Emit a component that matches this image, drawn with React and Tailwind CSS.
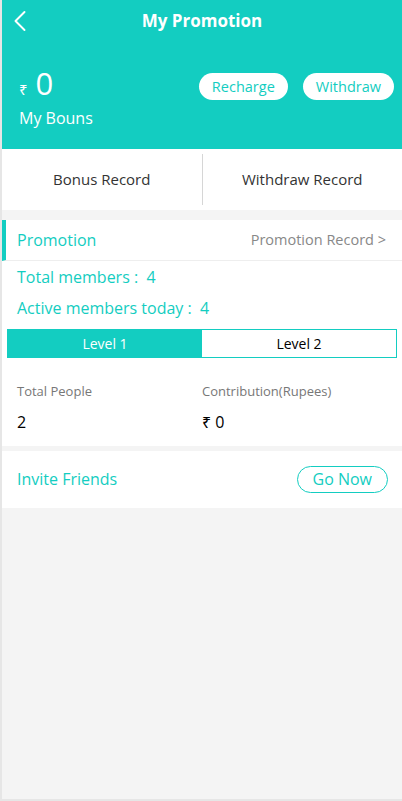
import { ChevronLeft } from "lucide-react";

const font = { fontFamily: '"Open Sans", "Noto Sans", sans-serif' };

export default function App() {
  return (
    <div
      className="h-[801px] w-[402px] flex flex-col bg-[#f4f4f4] border-l-2 border-b-2 border-[#e6e6e6] overflow-hidden"
      style={font}
    >
      {/* Header */}
      <header className="bg-[#13cdc1] text-white h-[149px] shrink-0 -ml-[2px] pl-[2px]">
        <div className="relative h-[42px] flex items-center justify-center">
          <ChevronLeft className="absolute left-0 top-[3px] w-[36px] h-[36px]" strokeWidth={1.3} />
          <div className="text-[17px] font-bold">My Promotion</div>
        </div>
        <div className="flex items-start justify-between pl-[17px] pr-[8px] pt-[22px]">
          <div>
            <div className="flex items-baseline gap-[8px]">
              <span className="text-[15px]">₹</span>
              <span className="text-[31px] leading-[38px]">0</span>
            </div>
            <div className="text-[16px] mt-[4px]">My Bouns</div>
          </div>
          <div className="flex gap-[15px] mt-[9px]">
            <button className="h-[27px] px-[13px] rounded-full bg-white text-[#13cdc1] text-[14.5px]">Recharge</button>
            <button className="h-[27px] px-[13px] rounded-full bg-white text-[#13cdc1] text-[14.5px]">Withdraw</button>
          </div>
        </div>
      </header>

      {/* Records */}
      <div className="bg-white h-[61px] flex items-center shrink-0">
        <div className="flex-1 text-center text-[15px] text-[#333]">Bonus Record</div>
        <div className="w-px h-[51px] bg-[#d6d6d6]" />
        <div className="flex-1 text-center text-[15px] text-[#333]">Withdraw Record</div>
      </div>

      {/* Promotion */}
      <div className="bg-white mt-[10px] shrink-0">
        <div className="h-[41px] flex items-center justify-between border-l-[4px] border-[#13cdc1] border-b border-b-[#eeeeee] pl-[11px] pr-[16px]">
          <span className="text-[16px] text-[#13cdc1]">Promotion</span>
          <span className="text-[14.5px] text-[#888]">Promotion Record &gt;</span>
        </div>
        <div className="px-[15px] text-[16px] text-[#13cdc1]">
          <div className="h-[31px] flex items-center">Total members :&nbsp; 4</div>
          <div className="h-[31px] flex items-center">Active members today :&nbsp; 4</div>
        </div>
        <div className="mx-[5px] mt-[6px] flex h-[29px] border border-[#13cdc1] text-[14px]">
          <div className="flex-1 bg-[#13cdc1] text-white flex items-center justify-center">Level 1</div>
          <div className="flex-1 bg-white text-black flex items-center justify-center">Level 2</div>
        </div>
        <div className="grid grid-cols-2 pt-[24px] pb-[12px]">
          <div className="pl-[15px]">
            <div className="text-[13px] text-[#777]">Total People</div>
            <div className="text-[16px] text-black mt-[8px]">2</div>
          </div>
          <div>
            <div className="text-[13px] text-[#777]">Contribution(Rupees)</div>
            <div className="text-[16px] text-black mt-[8px]">₹ 0</div>
          </div>
        </div>
      </div>

      {/* Invite */}
      <div className="bg-white mt-[5px] h-[57px] flex items-center justify-between pl-[15px] pr-[14px] shrink-0">
        <span className="text-[16px] text-[#13cdc1]">Invite Friends</span>
        <button className="h-[27px] px-[15px] rounded-full border border-[#13cdc1] text-[#13cdc1] text-[16px]">Go Now</button>
      </div>
    </div>
  );
}
